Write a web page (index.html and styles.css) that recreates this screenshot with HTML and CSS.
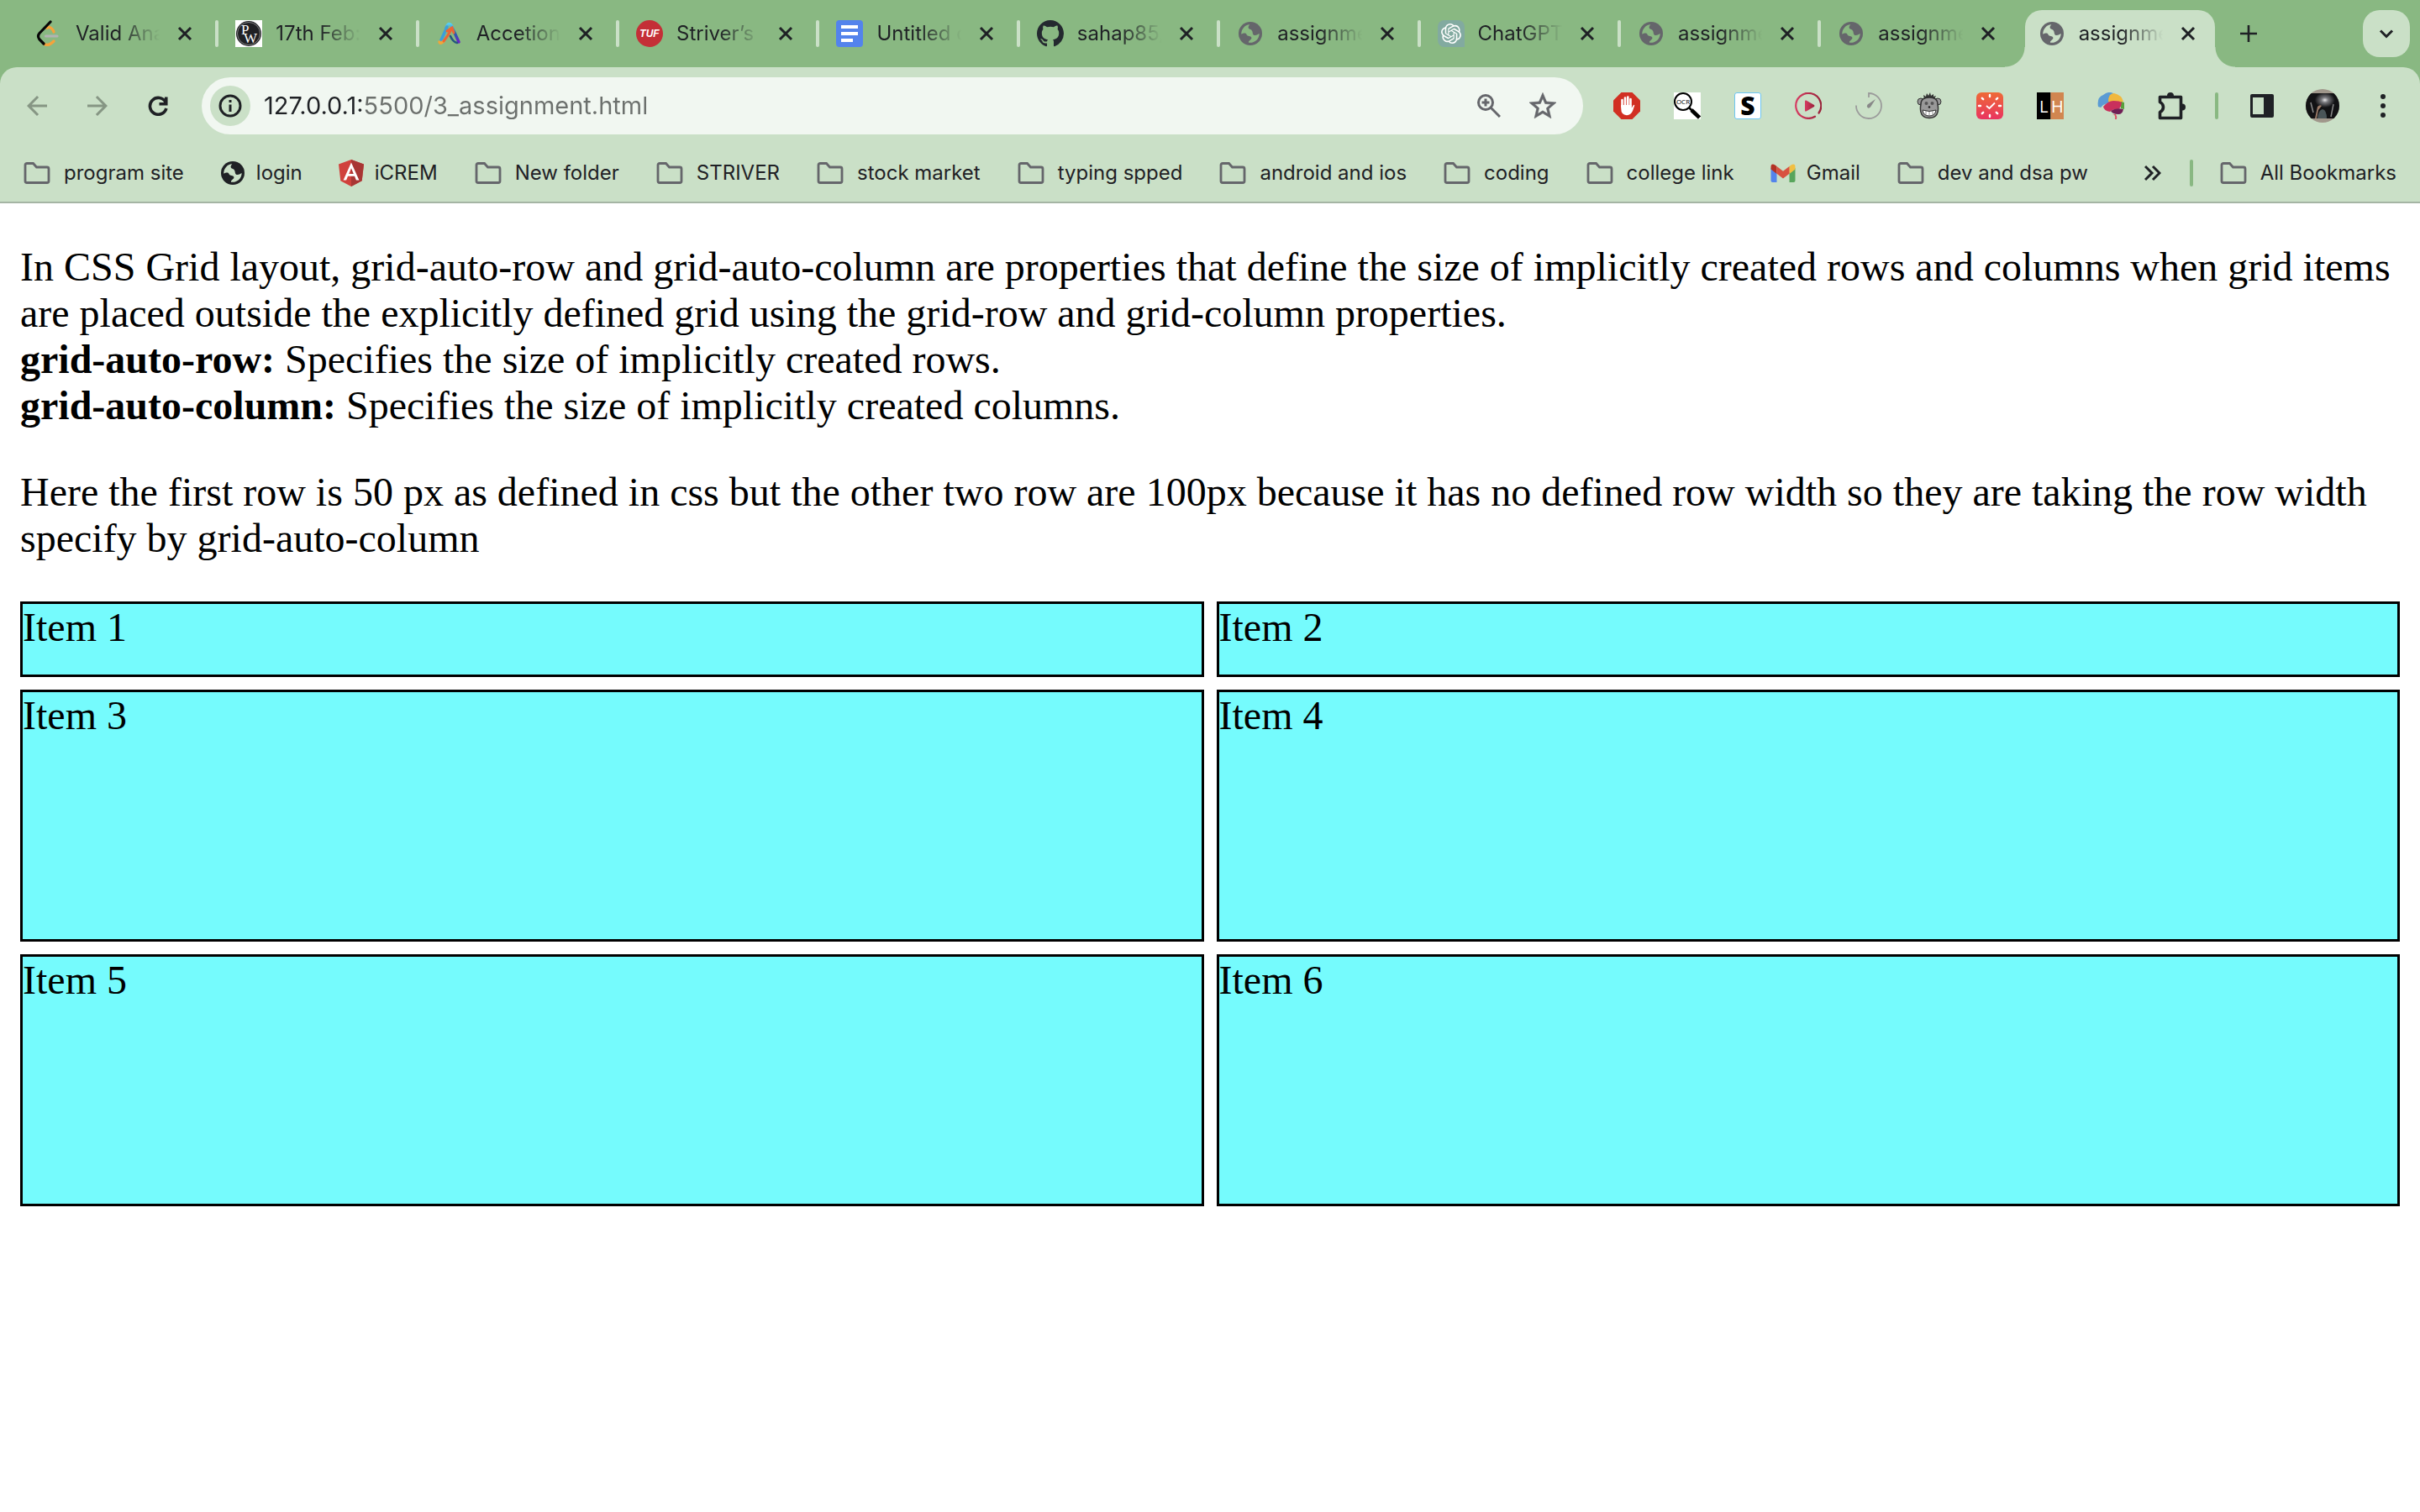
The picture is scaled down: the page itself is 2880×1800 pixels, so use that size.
FILE: index.html
```html
<!DOCTYPE html>
<html lang="en">
<head>
<meta charset="utf-8">
<title>assignment</title>
<link rel="stylesheet" href="styles.css">
</head>
<body>
<svg class="sprite" aria-hidden="true">
  <symbol id="folder" viewBox="0 0 32 32"><path d="M2 6.500a2 2 0 0 1 2-2h7.500l4 4.500H28a2 2 0 0 1 2 2v14.500a2 2 0 0 1-2 2H4a2 2 0 0 1-2-2z" fill="none" stroke="#65666b" stroke-width="2.800"/></symbol>
  <symbol id="globe" viewBox="18 18 84 84"><circle cx="60" cy="60" r="42" fill="currentColor"/><path class="land" d="M28 62A32 32 0 0 1 58 28C50 36 52 43 60 45C71 49 66 61 72 65C80 68 88 62 92 60A32 32 0 0 1 54 92C52 84 66 82 64 74C62 66 50 72 46 62C44 56 34 58 28 62Z"/></symbol>
  <symbol id="close" viewBox="0 0 20 20"><path d="M3 3l14 14M17 3L3 17" stroke="#1f2125" stroke-width="3" fill="none"/></symbol>
</svg>

<header class="browser">
  <nav class="tabs" aria-label="Tabs">
    <div class="tab"><button class="tab-main"><svg class="fav" viewBox="0 0 32 32" fill="none" stroke-width="3.200" stroke-linecap="round"><path d="M14 9.500l2-1.500q5 2 6 6M10 28q5 4 12-3" stroke="#f5a33b"/><path d="M12.500 19H26" stroke="#b3b3b3"/><path d="M18 2L5 15.500q-3 3.500 0 7.500L10 28" stroke="#070707"/></svg><span class="tab-title">Valid Anagram</span></button><button class="tab-close" aria-label="Close"><svg><use href="#close"/></svg></button></div>
    <div class="tab"><button class="tab-main"><svg class="fav" viewBox="0 0 32 32"><path fill="#fff" d="M0 0h32v32H0z"/><circle cx="16" cy="16" r="15" fill="#202124"/><circle cx="16" cy="16" r="13.500" fill="none" stroke="#aaa" stroke-width=".7"/><text x="7" y="17" class="pw">P</text><text x="10" y="27" class="pw">W</text></svg><span class="tab-title">17th Feb: class</span></button><button class="tab-close" aria-label="Close"><svg><use href="#close"/></svg></button></div>
    <div class="tab"><button class="tab-main"><svg class="fav" viewBox="0 0 32 32" fill="none" stroke-width="3.500" stroke-linecap="round"><defs><linearGradient id="acc" x1="0" y1="0" x2="0" y2="1"><stop stop-color="#57cdf0"/><stop offset=".5" stop-color="#2864a8"/><stop offset="1" stop-color="#6b20c8"/></linearGradient></defs><path d="M12 9q2-7 6-3l9 20" stroke="url(#acc)"/><path d="M13 8L5 26" stroke="#3d9fd8"/><path d="M4 26q1 3 5-1" stroke="#f0a63a"/><path d="M25 27q-5-1-8-8" stroke="#24577e" stroke-width="2.500"/><path d="M9 25q5-6 9-14M13 13l6-4 2 6" stroke="#ec6534" stroke-width="3"/></svg><span class="tab-title">Accetion job</span></button><button class="tab-close" aria-label="Close"><svg><use href="#close"/></svg></button></div>
    <div class="tab"><button class="tab-main"><svg class="fav" viewBox="0 0 32 32"><circle cx="16" cy="16" r="16" fill="#c42f37"/><text x="16" y="20" class="tuf">TUF</text></svg><span class="tab-title">Striver’s SDE</span></button><button class="tab-close" aria-label="Close"><svg><use href="#close"/></svg></button></div>
    <div class="tab"><button class="tab-main"><svg class="fav" viewBox="0 0 32 32"><rect width="32" height="32" rx="4" fill="#5383ec"/><path d="M6 8h20M6 16h20M6 24h14" stroke="#fff" stroke-width="4"/></svg><span class="tab-title">Untitled doc</span></button><button class="tab-close" aria-label="Close"><svg><use href="#close"/></svg></button></div>
    <div class="tab"><button class="tab-main"><svg class="fav" viewBox="0 0 16 16"><path fill="#24292f" d="M8 0C3.58 0 0 3.58 0 8c0 3.540 2.290 6.530 5.470 7.590.4.070.55-.17.55-.38 0-.19-.01-.82-.01-1.490-2.010.37-2.530-.49-2.690-.94-.09-.23-.48-.94-.82-1.130-.28-.15-.68-.52-.01-.53.63-.01 1.080.58 1.230.82.72 1.210 1.870.87 2.330.66.07-.52.28-.87.51-1.070-1.780-.2-3.640-.89-3.640-3.950 0-.87.31-1.590.82-2.150-.08-.2-.36-1.020.08-2.120 0 0 .67-.21 2.200.82.64-.18 1.320-.27 2-.27s1.360.09 2 .27c1.530-1.040 2.200-.82 2.200-.82.44 1.100.16 1.920.08 2.120.51.56.82 1.270.82 2.150 0 3.070-1.870 3.750-3.650 3.950.29.25.54.73.54 1.480 0 1.070-.01 1.930-.01 2.200 0 .21.15.46.55.38A8.010 8.010 0 0 0 16 8c0-4.420-3.580-8-8-8z"/></svg><span class="tab-title">sahap85/css</span></button><button class="tab-close" aria-label="Close"><svg><use href="#close"/></svg></button></div>
    <div class="tab"><button class="tab-main"><svg class="fav world"><use href="#globe"/></svg><span class="tab-title">assignment</span></button><button class="tab-close" aria-label="Close"><svg><use href="#close"/></svg></button></div>
    <div class="tab"><button class="tab-main"><svg class="fav" viewBox="0 0 32 32"><path d="M8 0h16a8 8 0 0 1 8 8v24H8a8 8 0 0 1-8-8V8a8 8 0 0 1 8-8z" fill="#82aaa0"/><path transform="translate(4 4)" fill="#fff" d="M22.282 9.821a5.985 5.985 0 0 0-.516-4.911 6.046 6.046 0 0 0-6.510-2.900A6.065 6.065 0 0 0 4.981 4.182a5.985 5.985 0 0 0-3.998 2.900 6.046 6.046 0 0 0 .743 7.097 5.980 5.980 0 0 0 .511 4.911 6.051 6.051 0 0 0 6.515 2.900A5.985 5.985 0 0 0 13.260 24a6.056 6.056 0 0 0 5.772-4.206 5.989 5.989 0 0 0 3.998-2.900 6.056 6.056 0 0 0-.748-7.073zm-9.022 12.608a4.476 4.476 0 0 1-2.876-1.041l.142-.080 4.778-2.758a.795.795 0 0 0 .393-.681v-6.737l2.020 1.169a.071.071 0 0 1 .038.052v5.583a4.504 4.504 0 0 1-4.495 4.494zm-9.661-4.125a4.471 4.471 0 0 1-.535-3.014l.142.085 4.783 2.758a.771.771 0 0 0 .781 0l5.843-3.369v2.332a.080.080 0 0 1-.033.062L9.740 19.950a4.499 4.499 0 0 1-6.141-1.646zM2.341 7.896a4.485 4.485 0 0 1 2.366-1.973V11.600a.766.766 0 0 0 .388.677l5.814 3.354-2.020 1.169a.076.076 0 0 1-.071 0l-4.830-2.787A4.504 4.504 0 0 1 2.341 7.872zm16.596 3.856L13.104 8.364 15.119 7.200a.076.076 0 0 1 .071 0l4.830 2.791a4.494 4.494 0 0 1-.677 8.104v-5.677a.790.790 0 0 0-.407-.667zm2.011-3.023l-.142-.085-4.774-2.782a.776.776 0 0 0-.785 0L9.409 9.230V6.897a.066.066 0 0 1 .028-.062l4.830-2.787a4.499 4.499 0 0 1 6.680 4.660zM8.307 12.863l-2.020-1.164a.080.080 0 0 1-.038-.057V6.074a4.499 4.499 0 0 1 7.376-3.454l-.142.081L8.704 5.459a.795.795 0 0 0-.393.681zm1.098-2.365l2.602-1.500 2.607 1.500v2.999l-2.597 1.500-2.607-1.500z"/></svg><span class="tab-title">ChatGPT app</span></button><button class="tab-close" aria-label="Close"><svg><use href="#close"/></svg></button></div>
    <div class="tab"><button class="tab-main"><svg class="fav world"><use href="#globe"/></svg><span class="tab-title">assignment</span></button><button class="tab-close" aria-label="Close"><svg><use href="#close"/></svg></button></div>
    <div class="tab tab-last"><button class="tab-main"><svg class="fav world"><use href="#globe"/></svg><span class="tab-title">assignment</span></button><button class="tab-close" aria-label="Close"><svg><use href="#close"/></svg></button></div>
    <div class="tab tab-active"><button class="tab-main"><svg class="fav world"><use href="#globe"/></svg><span class="tab-title">assignment</span></button><button class="tab-close" aria-label="Close"><svg><use href="#close"/></svg></button></div>
    <div class="tabs-end">
      <button class="icon-btn new-tab" aria-label="New tab"><svg class="s20" viewBox="0 0 20 20"><path d="M10 0v20M0 10h20" stroke="#1f2125" stroke-width="2.600"/></svg></button>
      <button class="tab-search" aria-label="Search tabs"><svg class="s20" viewBox="0 0 20 20"><path d="M3 6.500l7 7 7-7" fill="none" stroke="#1f2125" stroke-width="3"/></svg></button>
    </div>
  </nav>

  <div class="chrome">
    <div class="toolbar">
      <button class="icon-btn" aria-label="Back"><svg class="s24" viewBox="4 4 16 16"><path fill="#869684" d="M20 11H7.830l5.590-5.590L12 4l-8 8 8 8 1.410-1.410L7.830 13H20z"/></svg></button>
      <button class="icon-btn" aria-label="Forward"><svg class="s24" viewBox="4 4 16 16"><path fill="#869684" d="M4 13h12.170l-5.590 5.590L12 20l8-8-8-8-1.410 1.410L16.170 11H4z"/></svg></button>
      <button class="icon-btn" aria-label="Reload"><svg class="s24" viewBox="4 4 16 16"><path d="M18.500 5v5.500H13M18 9A6.600 6.600 0 1 0 18.600 14" fill="none" stroke="#1f2125" stroke-width="2.400"/></svg></button>
      <form class="omnibox">
        <button type="button" class="site-info" aria-label="Site information"><svg class="s28" viewBox="0 0 28 28"><circle cx="14" cy="14" r="12" fill="none" stroke="#1f2125" stroke-width="3"/><path d="M14 12.500V21M14 7v3" stroke="#1f2125" stroke-width="3"/></svg></button>
        <input class="url" type="text" aria-label="Address" value="127.0.0.1:5500/3_assignment.html">
        <button type="button" class="icon-btn" aria-label="Zoom"><svg class="s28" viewBox="0 0 28 28" fill="none" stroke="#65666b" stroke-width="3"><circle cx="10" cy="10" r="8.500"/><path d="M16 16l11 11M10 5.500v9M5.500 10h9"/></svg></button>
        <button type="button" class="icon-btn" aria-label="Bookmark this tab"><svg class="s32" viewBox="2 2 20 19.500"><path fill="#65666b" stroke="#65666b" stroke-width=".4" d="M22 9.240l-7.190-.62L12 2 9.190 8.630 2 9.240l5.460 4.730L5.820 21 12 17.270 18.180 21l-1.630-7.030zM12 15.400l-3.760 2.270 1-4.280-3.320-2.880 4.380-.38L12 6.100l1.710 4.040 4.380.38-3.320 2.880 1 4.280z"/></svg></button>
      </form>
      <button class="icon-btn" aria-label="AdBlock"><svg class="s32" viewBox="0 0 32 32"><path fill="#d12f22" d="M9.500 0h13L32 9.500v13L22.500 32h-13L0 22.500v-13z"/><path fill="none" stroke="#fff" stroke-width="2.600" stroke-linecap="round" d="M10.500 17V9M14 16V6.500M17.300 16V5.500M20.500 16V8"/><path fill="#fff" d="M9.200 15h12.600v3.500l2-3.300q1-.8 1.500.3L23 22q-2 5-7 5.200Q9.200 27 9.200 19z"/></svg></button>
      <button class="icon-btn" aria-label="OCR"><svg class="s32" viewBox="0 0 32 32"><path fill="#fff" d="M0 0h32v32H0z"/><circle cx="11" cy="11" r="10" fill="#fff" stroke="#000" stroke-width="2"/><path d="M18.500 18.500l3 3" stroke="#000" stroke-width="2.500"/><path d="M21 21l9.500 9" stroke="#000" stroke-width="4.500"/><text x="11" y="13.500" class="ocr">OCR</text></svg></button>
      <button class="icon-btn" aria-label="S extension"><svg class="s32" viewBox="0 0 32 32"><rect x=".5" y=".5" width="31" height="31" rx="2.500" fill="#fff" stroke="#6cc5f3"/><text x="16" y="27" class="ess">S</text></svg></button>
      <button class="icon-btn" aria-label="Video"><svg class="s32" viewBox="0 0 32 32"><defs><linearGradient id="vid"><stop stop-color="#d63d63"/><stop offset="1" stop-color="#992239"/></linearGradient></defs><path d="M28.500 24.500A15 15 0 1 0 24 28.700" fill="none" stroke="url(#vid)" stroke-width="2.200" stroke-linecap="round"/><path d="M12 10.500q0-1.500 1.500-1L23 15q1 1 0 2l-9.500 5.500q-1.500.5-1.500-1z" fill="url(#vid)"/></svg></button>
      <button class="icon-btn" aria-label="Speed"><svg class="s32" viewBox="0 0 32 32"><path d="M1 15.500A15 15 0 1 0 16 1v5" fill="none" stroke="#9b9b9b" stroke-width="1.800"/><path fill="#888" d="M24 8l-6 9.500q-2 2-3.500.5t0-3.500z"/></svg></button>
      <button class="icon-btn" aria-label="Monkey"><svg class="s32" viewBox="0 0 32 32"><path fill="#333" d="M10 8l-1-5 3 2 1-4 2 3 2-4 1 4 3-2v3l3-1-2 4z"/><circle cx="6" cy="11" r="4" fill="#999" stroke="#333"/><circle cx="26" cy="11" r="4" fill="#999" stroke="#333"/><path d="M6 14Q6 6 16 6t10 8q3 16-10 16.500Q3 30 6 14z" fill="#999" stroke="#333" stroke-width="1.500"/><circle cx="12.500" cy="13" r="2" fill="#555"/><circle cx="19.500" cy="13" r="2" fill="#555"/><path d="M8 21q8 3 16 0-1 7-8 7t-8-7z" fill="#fff" stroke="#333"/><path d="M12 22v5M16 23v5M20 22v5" stroke="#777" stroke-width=".8"/><circle cx="16" cy="17.500" r="1.300" fill="#222"/></svg></button>
      <button class="icon-btn" aria-label="Clock"><svg class="s32" viewBox="0 0 32 32"><defs><linearGradient id="clk" x1="0" y1="0" x2="0" y2="1"><stop stop-color="#ee6a37"/><stop offset="1" stop-color="#e93460"/></linearGradient></defs><rect width="32" height="32" rx="6" fill="url(#clk)"/><path d="M16 3v2M16 27v2M3 16h2M27 16h2M6.800 6.800l1.400 1.400M23.800 23.800l1.400 1.400M25.200 6.800l-1.400 1.400M8.200 23.800l-1.400 1.400" stroke="#fff" stroke-width="2.400" stroke-linecap="round"/><path d="M12 16l3.500 3 6.500-6.500" fill="none" stroke="#fff" stroke-width="1.800"/></svg></button>
      <button class="icon-btn" aria-label="LH"><svg class="s32" viewBox="0 0 32 32"><path d="M0 0h16.500v32H0z"/><path fill="#d18650" d="M16.500 0H32v32H16.500z"/><text x="3" y="24" class="lh">L</text><text x="17" y="24" class="lh">H</text></svg></button>
      <button class="icon-btn" aria-label="Brain"><svg class="s32" viewBox="0 0 32 32"><path fill="#5a9bd4" d="M1 17Q-1 6 7 3q6-5 12-2l-5 11-7 3-3 3z"/><path fill="#f1b83e" d="M13 11Q13 1 20 1q9 2 11 10l-4 2-8-2z"/><path fill="#56a03c" d="M28 11l4 1v8l-4-1z"/><path fill="#c9305c" d="M7 17q6-7 12-7 8 0 10 2-1 8-5 8-6 0-9 3-7-1-8-6z"/><path fill="#701f55" d="M16 22q6-4 15-2-1 6-6 6-7 0-9-4z"/><path fill="#dd5266" d="M18 26q4 0 3 6h2q1-3-1-6z"/></svg></button>
      <button class="icon-btn" aria-label="Extensions"><svg class="s36" viewBox="0 0 36 36"><path fill="none" stroke="#1f2125" stroke-width="3.600" stroke-linejoin="round" d="M4.500 7.500h25v25h-25v-7q4-2 4-6t-4-6z"/><path fill="#1f2125" d="M13 6a4 4 0 0 1 8 0zM31 15.500a4 4 0 0 1 0 8z"/></svg></button>
      <span class="divider"></span>
      <button class="icon-btn" aria-label="Side panel"><svg class="s32" viewBox="0 0 32 32"><path fill="#1f2125" fill-rule="evenodd" d="M4 2h24a2 2 0 0 1 2 2v24a2 2 0 0 1-2 2H4a2 2 0 0 1-2-2V4a2 2 0 0 1 2-2zm1 4v20h13V6z"/></svg></button>
      <button class="icon-btn" aria-label="Profile"><svg class="s40" viewBox="0 0 40 40"><defs><radialGradient id="lamp" cx=".57" cy=".27" r=".3"><stop stop-color="#e8e8ea"/><stop offset=".35" stop-color="#77777b"/><stop offset="1" stop-color="#121214"/></radialGradient><clipPath id="round"><circle cx="20" cy="20" r="20"/></clipPath></defs><g clip-path="url(#round)"><path fill="#a0978b" d="M0 0h40v40H0z"/><path fill="url(#lamp)" d="M0 5h40v30H0z"/><path fill="#9b7b68" d="M11 35l3-14q3-3 5-1l-4 5-2 10z"/><path fill="#4a5558" d="M14 35q1-10 6-11 5 1 5 11z"/><path stroke="#8a8a8a" stroke-width="1.500" d="M33 18l-3 15M6 16l3 12"/></g></svg></button>
      <button class="icon-btn" aria-label="Menu"><svg class="s32" viewBox="0 0 32 32" fill="#1f2125"><circle cx="16" cy="5" r="3"/><circle cx="16" cy="16" r="3"/><circle cx="16" cy="27" r="3"/></svg></button>
    </div>

    <nav class="bookmarks" aria-label="Bookmarks">
      <a href="#"><svg class="s32"><use href="#folder"/></svg>program site</a>
      <a href="#" class="site"><svg class="s32 world dark"><use href="#globe"/></svg>login</a>
      <a href="#" class="site"><svg class="s32" viewBox="0 0 32 32"><path fill="#d0413c" d="M16 0l15 5.500-2.300 19.800L16 32 3.300 25.300 1 5.500z"/><path fill="#a83634" d="M16 0l15 5.500-2.300 19.800L16 32z"/><path fill="#fff" d="M16 3.600L6.600 24.500h3.500l1.900-4.700h8l1.900 4.700h3.500zm0 6.700l2.800 6.600h-5.600z"/></svg>iCREM</a>
      <a href="#"><svg class="s32"><use href="#folder"/></svg>New folder</a>
      <a href="#"><svg class="s32"><use href="#folder"/></svg>STRIVER</a>
      <a href="#"><svg class="s32"><use href="#folder"/></svg>stock market</a>
      <a href="#"><svg class="s32"><use href="#folder"/></svg>typing spped</a>
      <a href="#"><svg class="s32"><use href="#folder"/></svg>android and ios</a>
      <a href="#"><svg class="s32"><use href="#folder"/></svg>coding</a>
      <a href="#"><svg class="s32"><use href="#folder"/></svg>college link</a>
      <a href="#" class="site"><svg class="s32" viewBox="0 0 32 32"><path fill="#5384ec" d="M1.500 10l7 5.500V27H3.500a2 2 0 0 1-2-2z"/><path fill="#58a55c" d="M30.500 10l-7 5.500V27h5a2 2 0 0 0 2-2z"/><path fill="#f1bf42" d="M23.500 8l2-1.600q5-2.400 5 2.600v2.500l-7 5.500z"/><path fill="#b33225" d="M8.500 8l-2-1.600q-5-2.400-5 2.600v2.500l7 5.500z"/><path fill="#d85140" d="M8.500 8l7.500 5.800L23.500 8v8.800L16 22.500l-7.500-5.700z"/></svg>Gmail</a>
      <a href="#"><svg class="s32"><use href="#folder"/></svg>dev and dsa pw</a>
      <button class="more" aria-label="More bookmarks"><svg class="s20" viewBox="0 0 20 20"><path d="M1 2l8 8-8 8M10 2l8 8-8 8" fill="none" stroke="#1f2125" stroke-width="3"/></svg></button>
      <span class="divider"></span>
      <a href="#"><svg class="s32"><use href="#folder"/></svg>All Bookmarks</a>
    </nav>
  </div>
</header>

<main class="page">
  <p>In CSS Grid layout, grid-auto-row and grid-auto-column are properties that define the size of implicitly created rows and columns when grid items are placed outside the explicitly defined grid using the grid-row and grid-column properties.<br><b>grid-auto-row:</b> Specifies the size of implicitly created rows.<br><b>grid-auto-column:</b> Specifies the size of implicitly created columns.</p>
  <p>Here the first row is 50 px as defined in css but the other two row are 100px because it has no defined row width so they are taking the row width specify by grid-auto-column</p>
  <div class="grid">
    <div class="item">Item 1</div>
    <div class="item">Item 2</div>
    <div class="item">Item 3</div>
    <div class="item">Item 4</div>
    <div class="item">Item 5</div>
    <div class="item">Item 6</div>
  </div>
</main>
</body>
</html>
```
FILE: styles.css
```css
:root {
  --frame: #89b882;
  --bar: #cae0c7;
  --field: #f1f7f1;
  --ink: #1f2125;
  --muted: #65666b;
  --land: var(--frame);
}

* { box-sizing: border-box; }

body {
  margin: 0;
  background: #fff;
}

.sprite {
  position: absolute;
  width: 0;
  height: 0;
}

button, input {
  margin: 0;
  padding: 0;
  border: 0;
  background: none;
  font: inherit;
  color: inherit;
}

svg {
  display: block;
  flex: none;
}

.s20 { width: 20px; height: 20px; }
.s24 { width: 24px; height: 24px; }
.s28 { width: 28px; height: 28px; }
.s32 { width: 32px; height: 32px; }
.s36 { width: 36px; height: 36px; }
.s40 { width: 40px; height: 40px; }

.browser {
  background: var(--frame);
  color: var(--ink);
  font: 24px/32px Inter, "Liberation Sans", sans-serif;
}

/* Tab strip */
.tabs {
  display: grid;
  grid-template-columns: repeat(11, minmax(0, 1fr)) 224px;
  padding: 12px 12px 0 22px;
}

.tab {
  position: relative;
  display: flex;
  align-items: center;
  padding: 0 0 12px 20px;
}

.tab::after {
  content: "";
  width: 4px;
  height: 32px;
  margin-left: 26px;
  border-radius: 2px;
  background: var(--bar);
}

.tab-main {
  flex: 1;
  min-width: 0;
  display: flex;
  align-items: center;
  gap: 16px;
  margin-right: 20px;
  text-align: left;
}

.fav {
  width: 32px;
  height: 32px;
}

.world {
  padding: 2px;
  color: var(--muted);
}

.world.dark { color: var(--ink); }
.land { fill: var(--land); }
.tab-active, .bookmarks { --land: var(--bar); }

.tab-title {
  flex: 1;
  overflow: hidden;
  white-space: nowrap;
  mask-image: linear-gradient(to right, #000 50%, transparent);
}

.tab-close svg {
  width: 20px;
  height: 20px;
}

.tab-last::after { visibility: hidden; }

.tab-active {
  margin: 0 8px 0 4px;
  padding-left: 16px;
  border-radius: 20px 20px 0 0;
  background: var(--bar);
}

.tab-active::after {
  width: 0;
  margin-left: 22px;
}

.tab-active::before {
  content: "";
  position: absolute;
  inset: auto -24px 0;
  height: 24px;
  background:
    radial-gradient(circle at 0 0, transparent 23px, var(--bar) 24px) left / 24px 24px no-repeat,
    radial-gradient(circle at 100% 0, transparent 23px, var(--bar) 24px) right / 24px 24px no-repeat;
}

.tabs-end {
  display: flex;
  justify-content: space-between;
  padding-bottom: 12px;
}

.tab-search {
  width: 56px;
  height: 56px;
  display: grid;
  place-items: center;
  border-radius: 20px;
  background: var(--bar);
}

/* Toolbar */
.chrome {
  border-radius: 20px 20px 0 0;
  border-bottom: 2px solid #a5b5a4;
  background: var(--bar);
}

.toolbar {
  display: flex;
  align-items: center;
  padding: 12px 8px;
}

.icon-btn {
  flex: none;
  width: 72px;
  display: grid;
  place-items: center;
}

.new-tab, .omnibox .icon-btn { width: 64px; }

.omnibox {
  flex: 1;
  display: flex;
  align-items: center;
  height: 68px;
  margin: 0 16px;
  padding: 0 16px 0 10px;
  border-radius: 34px;
  background: var(--field);
}

.site-info {
  width: 48px;
  height: 48px;
  display: grid;
  place-items: center;
  border-radius: 50%;
  background: var(--bar);
}

.url {
  flex: 1;
  min-width: 0;
  margin-left: 16px;
  font-size: 29px;
  color: var(--ink);
  background: linear-gradient(to right, var(--ink) 117px, #6c706d 117px) text;
  -webkit-text-fill-color: transparent;
}

.divider {
  flex: none;
  width: 4px;
  height: 32px;
  margin: 0 16px;
  border-radius: 2px;
  background: var(--frame);
}

/* Bookmarks bar */
.bookmarks {
  display: flex;
  align-items: center;
  gap: 44px;
  height: 68px;
  padding: 0 28px;
}

.bookmarks a {
  display: flex;
  align-items: center;
  gap: 16px;
  color: inherit;
  text-decoration: none;
  white-space: nowrap;
}

.bookmarks .site {
  gap: 12px;
  margin-left: -2px;
}

.more { margin-left: auto; }
.bookmarks .divider { margin: 0 -12px 0 -10px; }

/* Lettering inside icons */
.pw { font: 17px "Liberation Serif", serif; fill: #fff; }
.tuf { font: italic bold 12px "Liberation Sans", sans-serif; fill: #fff; text-anchor: middle; }
.ocr { font: 8px "Open Sans", sans-serif; text-anchor: middle; }
.ess { font: 800 30px "Open Sans", sans-serif; text-anchor: middle; }
.lh { font: 20px "Open Sans", sans-serif; fill: #fff; }

/* Page content */
.page {
  padding: 0 24px;
  color: #000;
  font: 48px/55px "Liberation Serif", serif;
}

.page p {
  margin: 0;
  padding-top: 48px;
}

.grid {
  display: grid;
  grid-template-columns: 1fr 1fr;
  grid-template-rows: 90px;
  grid-auto-rows: 300px;
  gap: 15px;
  margin-top: 48px;
}

.item {
  border: 3px solid #000;
  background: #75fbfd;
}
```
